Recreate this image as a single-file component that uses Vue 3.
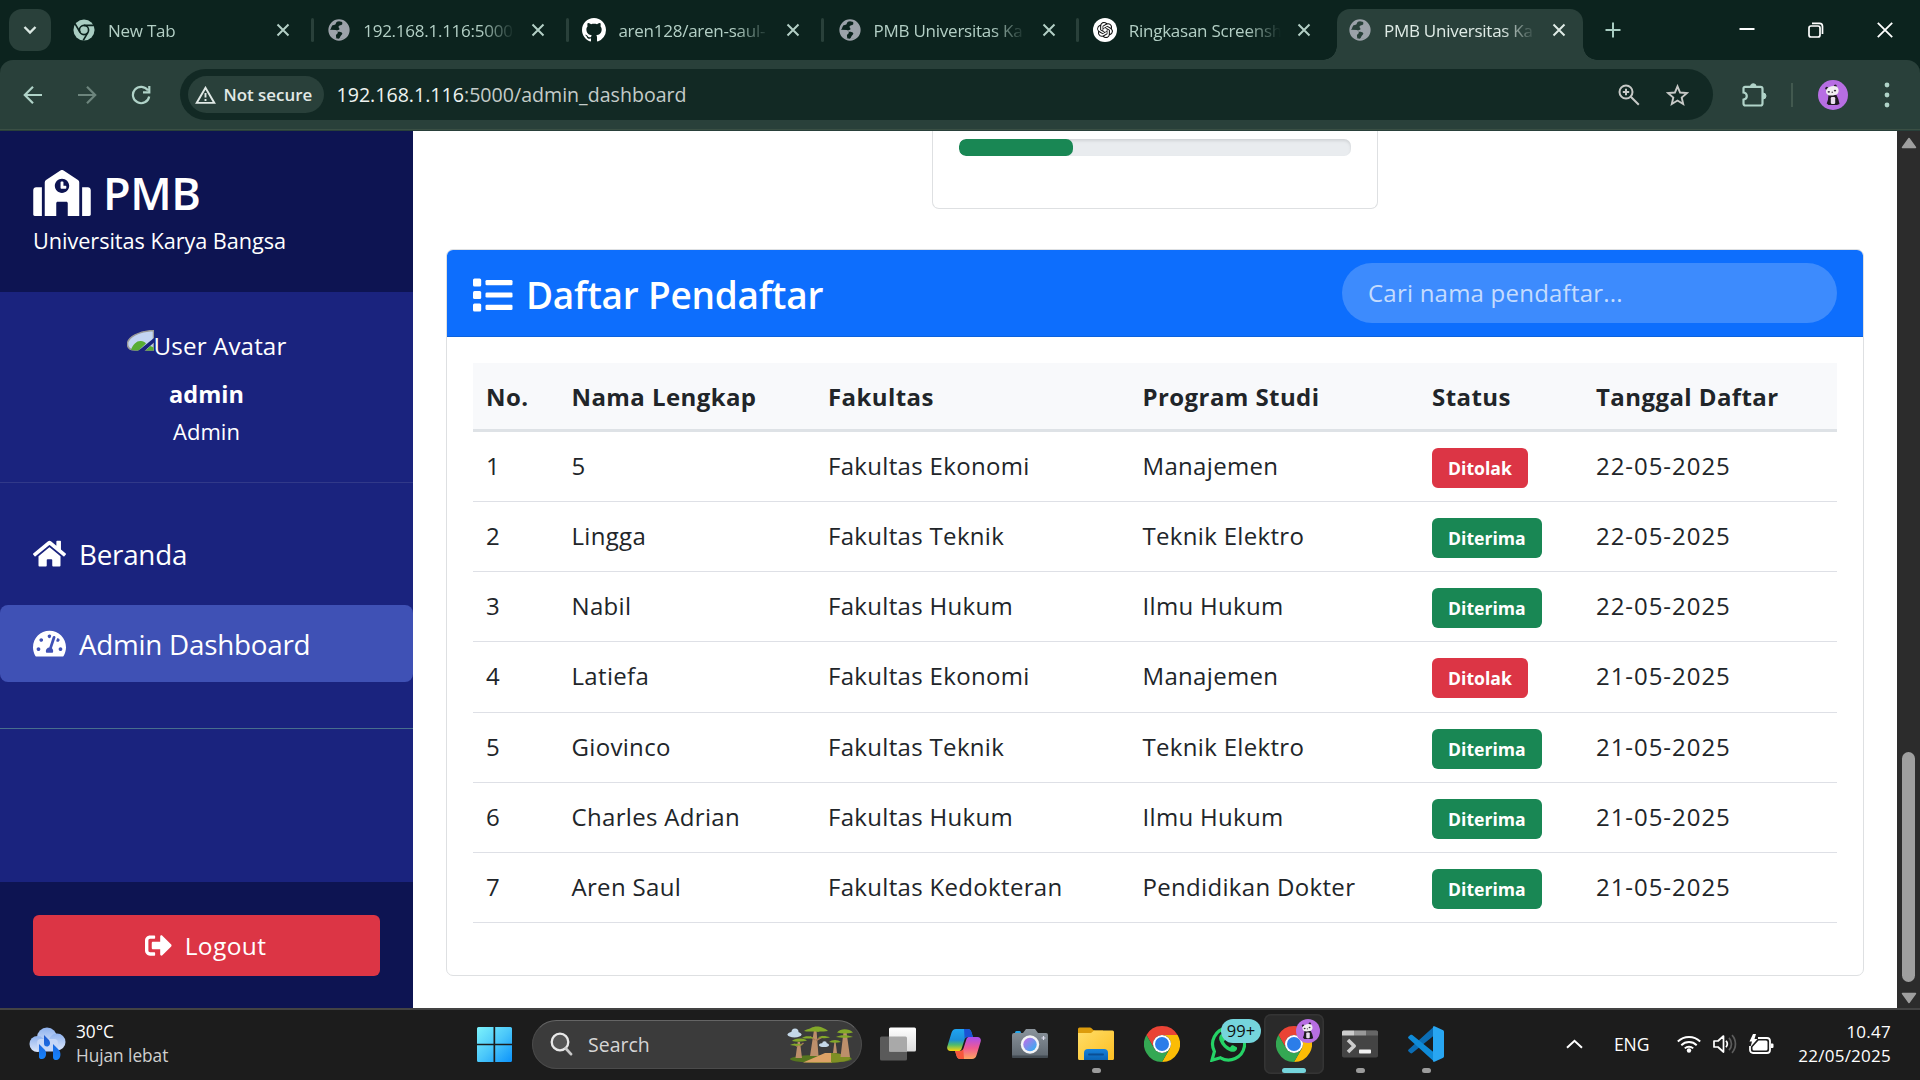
<script setup>
const tabs = [
  { title: 'New Tab', icon: 'i-chrome-mono' },
  { title: '192.168.1.116:5000', icon: 'i-globe' },
  { title: 'aren128/aren-saul-', icon: 'i-github' },
  { title: 'PMB Universitas Ka', icon: 'i-globe' },
  { title: 'Ringkasan Screensh', icon: 'i-openai' },
  { title: 'PMB Universitas Ka', icon: 'i-globe', active: true }
]

const applicants = [
  { name: '5', faculty: 'Fakultas Ekonomi', program: 'Manajemen', status: 'Ditolak', date: '22-05-2025' },
  { name: 'Lingga', faculty: 'Fakultas Teknik', program: 'Teknik Elektro', status: 'Diterima', date: '22-05-2025' },
  { name: 'Nabil', faculty: 'Fakultas Hukum', program: 'Ilmu Hukum', status: 'Diterima', date: '22-05-2025' },
  { name: 'Latiefa', faculty: 'Fakultas Ekonomi', program: 'Manajemen', status: 'Ditolak', date: '21-05-2025' },
  { name: 'Giovinco', faculty: 'Fakultas Teknik', program: 'Teknik Elektro', status: 'Diterima', date: '21-05-2025' },
  { name: 'Charles Adrian', faculty: 'Fakultas Hukum', program: 'Ilmu Hukum', status: 'Diterima', date: '21-05-2025' },
  { name: 'Aren Saul', faculty: 'Fakultas Kedokteran', program: 'Pendidikan Dokter', status: 'Diterima', date: '21-05-2025' }
]
</script>

<template>
  <div class="screen">
    <svg class="defs" width="0" height="0" aria-hidden="true">
      <defs>
        <linearGradient id="g-win" x1="0" y1="0" x2="1" y2="1"><stop offset="0" stop-color="#7df3fb" /><stop offset=".5" stop-color="#4cc8fa" /><stop offset="1" stop-color="#0c93fb" /></linearGradient>
        <linearGradient id="g-cloud" x1="0" y1="0" x2="0" y2="1"><stop offset="0" stop-color="#8fb2ee" /><stop offset="1" stop-color="#dce7fb" /></linearGradient>
        <linearGradient id="g-drop" x1="0" y1="0" x2="0" y2="1"><stop offset="0" stop-color="#1f58cc" /><stop offset="1" stop-color="#1585ff" /></linearGradient>
        <linearGradient id="g-folder" x1="0" y1="0" x2="1" y2="1"><stop offset="0" stop-color="#ffdd68" /><stop offset="1" stop-color="#fdbf22" /></linearGradient>
        <linearGradient id="g-folderblue" x1="0" y1="0" x2="0" y2="1"><stop offset="0" stop-color="#1782dc" /><stop offset="1" stop-color="#0b63b3" /></linearGradient>
        <linearGradient id="g-cam" x1="0" y1="0" x2="0" y2="1"><stop offset="0" stop-color="#8b949c" /><stop offset="1" stop-color="#5d666e" /></linearGradient>
        <linearGradient id="g-lens" x1="0" y1="0" x2="1" y2="1"><stop offset="0" stop-color="#c86be8" /><stop offset="1" stop-color="#26b4f2" /></linearGradient>
        <linearGradient id="g-cop1" x1="0" y1="0" x2="0" y2="1"><stop offset="0" stop-color="#1fa4f2" /><stop offset=".5" stop-color="#1b8fd8" /><stop offset=".72" stop-color="#4fbb6d" /><stop offset="1" stop-color="#fbd40b" /></linearGradient>
        <linearGradient id="g-cop2" x1="0" y1="0" x2="0" y2="1"><stop offset="0" stop-color="#a84df0" /><stop offset=".5" stop-color="#ef5a92" /><stop offset="1" stop-color="#fda560" /></linearGradient>
        <linearGradient id="g-tv" x1="0" y1="0" x2="0" y2="1"><stop offset="0" stop-color="#fff" /><stop offset="1" stop-color="#dcdcdc" /></linearGradient>
      </defs>
      <symbol id="i-chrome-mono" viewBox="0 0 24 24">
        <circle cx="12" cy="12" r="11.500" fill="#a9cdc2" />
        <circle cx="12" cy="12" r="5" fill="none" stroke="#0c231e" stroke-width="1.800" />
        <path d="M12 7H22.800M7.700 14.500L2.300 5.400M16.300 14.500L11.200 23.300" stroke="#0c231e" stroke-width="1.800" fill="none" />
      </symbol>
      <symbol id="i-globe" viewBox="0 0 24 24">
        <circle cx="12" cy="12" r="10.600" fill="none" stroke="#9ca2aa" stroke-width="2" />
        <path fill="#9ca2aa" d="M15.500 2.500c-.2 1.500.4 2.300 0 3.300-.8 1.500-3.500.8-4 2.300-.3 1.400 1.300 1.600 1 3-.2.900-2.600.6-2.700 2 0 1.300 3.600.6 5.200 1.600 1.300 1 .3 2.300-.8 3.300-1 1-1 2.600-2.300 3.800C17.500 22.500 22.500 18 22.500 12c0-4.500-3-8.300-7-9.500zM1.800 11.800l6.400.2c2 .3 2.600 1.600 2.500 3-.2 1.300-1.700 1.400-2 2.700-.2 1.300.6 2.300.2 3.900C4.500 20.300 1.800 16.500 1.800 11.800zM2 11C2.500 6 6 2.500 10 1.900L8 6 4.500 7.200 3 10.500z" />
      </symbol>
      <symbol id="i-github" viewBox="0 0 16 16">
        <path fill="#fff" d="M8 0C3.580 0 0 3.580 0 8c0 3.540 2.290 6.530 5.470 7.590.4.070.55-.17.55-.38 0-.19-.01-.82-.01-1.490-2.010.37-2.530-.49-2.690-.94-.09-.23-.48-.94-.82-1.130-.28-.15-.68-.52-.01-.53.63-.01 1.080.58 1.230.82.72 1.210 1.870.87 2.330.66.07-.52.28-.87.51-1.070-1.780-.2-3.640-.89-3.640-3.950 0-.87.31-1.590.82-2.150-.08-.2-.36-1.020.08-2.120 0 0 .67-.21 2.200.82.64-.18 1.320-.27 2-.27s1.360.09 2 .27c1.530-1.040 2.200-.82 2.200-.82.44 1.100.16 1.920.08 2.120.51.56.82 1.270.82 2.150 0 3.070-1.870 3.750-3.650 3.950.29.25.54.73.54 1.480 0 1.070-.01 1.930-.01 2.200 0 .21.15.46.55.38A8.010 8.010 0 0 0 16 8c0-4.420-3.580-8-8-8z" />
      </symbol>
      <symbol id="i-openai" viewBox="-6 -6 36 36">
        <circle cx="12" cy="12" r="18" fill="#fff" />
        <path fill="#111" d="M22.2819 9.8211a5.9847 5.9847 0 0 0-.5157-4.9108 6.0462 6.0462 0 0 0-6.5098-2.9A6.0651 6.0651 0 0 0 4.9807 4.1818a5.9847 5.9847 0 0 0-3.9977 2.9 6.0462 6.0462 0 0 0 .7427 7.0966 5.98 5.98 0 0 0 .511 4.9107 6.051 6.051 0 0 0 6.5146 2.9001A5.9847 5.9847 0 0 0 13.2599 24a6.0557 6.0557 0 0 0 5.7718-4.2058 5.9894 5.9894 0 0 0 3.9977-2.9001 6.0557 6.0557 0 0 0-.7475-7.0729zm-9.022 12.6081a4.4755 4.4755 0 0 1-2.8764-1.0408l.1419-.0804 4.7783-2.7582a.7948.7948 0 0 0 .3927-.6813v-6.7369l2.02 1.1686a.071.071 0 0 1 .038.052v5.5826a4.504 4.504 0 0 1-4.4945 4.4944zm-9.6607-4.1254a4.4708 4.4708 0 0 1-.5346-3.0137l.142.0852 4.783 2.7582a.7712.7712 0 0 0 .7806 0l5.8428-3.3685v2.3324a.0804.0804 0 0 1-.0332.0615L9.74 19.9502a4.4992 4.4992 0 0 1-6.1408-1.6464zM2.3408 7.8956a4.485 4.485 0 0 1 2.3655-1.9728V11.6a.7664.7664 0 0 0 .3879.6765l5.8144 3.3543-2.0201 1.1685a.0757.0757 0 0 1-.071 0l-4.8303-2.7865A4.504 4.504 0 0 1 2.3408 7.872zm16.5963 3.8558L13.1038 8.364 15.1192 7.2a.0757.0757 0 0 1 .071 0l4.8303 2.7913a4.4944 4.4944 0 0 1-.6765 8.1042v-5.6772a.79.79 0 0 0-.407-.667zm2.0107-3.0231l-.142-.0852-4.7735-2.7818a.7759.7759 0 0 0-.7854 0L9.409 9.2297V6.8974a.0662.0662 0 0 1 .0284-.0615l4.8303-2.7866a4.4992 4.4992 0 0 1 6.6802 4.66zM8.3065 12.863l-2.02-1.1638a.0804.0804 0 0 1-.038-.0567V6.0742a4.4992 4.4992 0 0 1 7.3757-3.4537l-.142.0805L8.704 5.459a.7948.7948 0 0 0-.3927.6813zm1.0976-2.3654l2.602-1.4998 2.6069 1.4998v2.9994l-2.5974 1.4997-2.6067-1.4997Z" />
      </symbol>
      <symbol id="i-chrome" viewBox="0 0 36 36">
        <path fill="#ea4335" d="M2.410 9A18 18 0 0 1 33.590 9H18a9 9 0 0 0-7.790 13.500z" />
        <path fill="#fbbc05" d="M33.590 9A18 18 0 0 1 18 36l7.790-13.500A9 9 0 0 0 18 9z" />
        <path fill="#34a853" d="M18 36A18 18 0 0 1 2.410 9l7.800 13.500a9 9 0 0 0 15.580 0z" />
        <circle cx="18" cy="18" r="9" fill="#fff" />
        <circle cx="18" cy="18" r="7" fill="#2b7de9" />
      </symbol>
      <symbol id="i-panda" viewBox="0 0 30 30">
        <circle cx="15" cy="15" r="15" fill="#b76ee3" />
        <circle cx="8.800" cy="8.300" r="1.500" fill="#26202a" /><circle cx="17.300" cy="6" r="1.500" fill="#26202a" />
        <path d="M10.500 15h8l1.800 4 1.200 5-2.500 1h-8.500l-1.800-1.500 1.200-3.500z" fill="#1f1a22" />
        <rect x="12.800" y="17" width="4.400" height="7" rx="1.200" fill="#eadff0" />
        <path d="M8.200 10c1.500-3 7-5 10.800-3.200 2 2 2.200 5 .6 7-2 2-8 2.200-9.600 1.200C8.400 14 7.600 12 8.200 10z" fill="#f1eef2" />
        <ellipse cx="10.800" cy="11.800" rx="1.200" ry=".9" fill="#3a3340" /><ellipse cx="17" cy="10.600" rx="1.200" ry=".9" fill="#3a3340" />
        <circle cx="14.200" cy="12.300" r=".7" fill="#3a3340" />
      </symbol>
    </svg>

    <header class="tabstrip">
      <div class="tab-search">
        <svg width="14" height="10" viewBox="0 0 14 10"><path d="M1.500 2l5.500 5.500L12.500 2" fill="none" stroke="#dbe8e3" stroke-width="2.400" /></svg>
      </div>
      <div class="tabs">
        <div v-for="(tab, i) in tabs" :key="i" class="tab" :class="{ active: tab.active, last: i === 4 }">
          <div class="tab-body">
            <svg class="favicon" :class="{ large: tab.icon === 'i-openai' || tab.icon === 'i-github' }"><use :href="'#' + tab.icon" /></svg>
            <span class="tab-title">{{ tab.title }}</span>
            <svg class="tab-close" width="14" height="14" viewBox="0 0 14 14"><path d="M1.500 1.500l11 11m0-11l-11 11" stroke="currentColor" stroke-width="2" /></svg>
          </div>
        </div>
      </div>
      <div class="new-tab"><svg width="16" height="16" viewBox="0 0 16 16"><path d="M8 .5v15M.5 8h15" stroke="#a9cdc2" stroke-width="2" /></svg></div>
      <div class="window-buttons">
        <svg width="16" height="16" viewBox="0 0 16 16"><path d="M.5 7h15" stroke="#fff" stroke-width="2" /></svg>
        <svg width="16" height="16" viewBox="0 0 16 16"><rect x="1" y="4" width="11" height="11" rx="2" fill="none" stroke="#fff" stroke-width="1.700" /><path d="M4 1.400h7.500a3 3 0 0 1 3 3V12" fill="none" stroke="#fff" stroke-width="1.700" /></svg>
        <svg width="16" height="16" viewBox="0 0 16 16"><path d="M.8.8l14.400 14.400M15.200.8L.8 15.200" stroke="#fff" stroke-width="1.800" /></svg>
      </div>
    </header>

    <div class="toolbar">
      <div class="nav-icons">
        <svg width="20" height="20" viewBox="0 0 20 20"><path d="M19 10H2M10 1.800L1.800 10l8.200 8.200" fill="none" stroke="#b0d3c8" stroke-width="2.200" /></svg>
        <svg width="20" height="20" viewBox="0 0 20 20"><path d="M1 10h17M10 1.800l8.200 8.200-8.200 8.200" fill="none" stroke="#6d857d" stroke-width="2.200" /></svg>
        <svg width="20" height="20" viewBox="0 0 20 20"><path d="M17 5.500A8.200 8.200 0 1 0 18.200 11.500M18.300 1v6.300H12" fill="none" stroke="#b0d3c8" stroke-width="2.200" /></svg>
      </div>
      <div class="omnibox">
        <div class="chip">
          <svg width="21" height="18" viewBox="0 0 21 18"><path d="M10.500 1.800L1.700 16.900h17.600z" fill="none" stroke="#e1e9e6" stroke-width="1.900" /><path d="M10.500 7v4.500M10.500 13v2" stroke="#e1e9e6" stroke-width="1.900" /></svg>
          <span>Not secure</span>
        </div>
        <span class="url"><b>192.168.1.116</b>:5000/admin_dashboard</span>
        <svg class="zoom-icon" width="22" height="22" viewBox="0 0 22 22"><circle cx="8" cy="8" r="6.500" fill="none" stroke="#c7c9c7" stroke-width="2" /><path d="M12.800 12.800l8 8M8 4.800v6.400M4.800 8h6.400" stroke="#c7c9c7" stroke-width="2" /></svg>
        <svg width="23" height="22" viewBox="0 0 23 22"><path d="M11.500 2.300l2.600 6.200 6.700.6-5.100 4.400 1.500 6.500-5.700-3.500-5.700 3.500 1.500-6.500-5.100-4.400 6.700-.6z" fill="none" stroke="#c7c9c7" stroke-width="1.900" /></svg>
      </div>
      <svg class="puzzle" width="26" height="26" viewBox="0 0 26 26"><path d="M4 4.800h15.500a2 2 0 0 1 2 2v14.700a2 2 0 0 1-2 2H4.500a2 2 0 0 1-2-2v-3.800c2.300-.4 3.300-1.700 3.300-3.600s-1-3.200-3.300-3.600V6.300A1.500 1.500 0 0 1 4 4.800z" fill="none" stroke="#b0d3c8" stroke-width="2.200" /><path d="M9.500 4.500a2.800 2.800 0 0 1 5.600 0zM22 11a3 3 0 0 1 0 6z" fill="#b0d3c8" stroke="#b0d3c8" /></svg>
      <i class="bar-sep"></i>
      <svg class="avatar"><use href="#i-panda" /></svg>
      <svg width="6" height="26" viewBox="0 0 6 26"><circle cx="3" cy="3" r="2.400" fill="#b0d3c8" /><circle cx="3" cy="13" r="2.400" fill="#b0d3c8" /><circle cx="3" cy="23" r="2.400" fill="#b0d3c8" /></svg>
    </div>

    <div class="viewport">
      <aside class="sidebar">
        <div class="brand">
          <div class="brand-row">
            <svg width="58" height="46" viewBox="0 0 640 512"><path fill="#fff" d="M0 224v272c0 8.840 7.160 16 16 16h80V192H32c-17.670 0-32 14.330-32 32zm360-48h-24v-40c0-4.420-3.580-8-8-8h-16c-4.420 0-8 3.580-8 8v64c0 4.420 3.580 8 8 8h48c4.420 0 8-3.580 8-8v-16c0-4.420-3.580-8-8-8zm137.750-63.960l-160-106.670a32.020 32.020 0 0 0-35.500 0l-160 106.670A32.002 32.002 0 0 0 128 138.660V512h128V368c0-8.840 7.160-16 16-16h96c8.840 0 16 7.160 16 16v144h128V138.670c0-10.700-5.350-20.690-14.250-26.630zM320 256c-44.180 0-80-35.820-80-80s35.820-80 80-80 80 35.820 80 80-35.820 80-80 80zm288-64h-64v320h80c8.840 0 16-7.160 16-16V224c0-17.670-14.330-32-32-32z" /></svg>
            <span class="brand-name">PMB</span>
          </div>
          <div class="brand-sub">Universitas Karya Bangsa</div>
        </div>
        <div class="profile">
          <div class="broken">
            <svg width="27" height="21" viewBox="0 0 27 21"><path d="M26.500.5V20H8C3 20 .5 17.500.5 14 .5 7 12 1 26.500.5z" fill="#c3d5f3" stroke="#9a9a98" stroke-width="1.500" /><path d="M4 20c2-6 6-9.500 10-9 2 .2 4 1 5 2.500L11.500 20.500z" fill="#58ad33" /><path d="M11 21L27 8v4.500L17.500 21z" fill="#1a237e" /><path d="M18.500 20.500l5-4.500 3 1.500v3z" fill="#58ad33" /></svg>
            <span>User Avatar</span>
          </div>
          <div class="user-name">admin</div>
          <div class="user-role">Admin</div>
        </div>
        <nav class="menu">
          <a class="menu-item">
            <svg width="33" height="29.400" viewBox="0 0 576 512"><path fill="#fff" d="M280.370 148.260L96 300.110V464a16 16 0 0 0 16 16l112.060-.29a16 16 0 0 0 15.920-16V368a16 16 0 0 1 16-16h64a16 16 0 0 1 16 16v95.640a16 16 0 0 0 16 16.050L464 480a16 16 0 0 0 16-16V300L295.670 148.260a12.190 12.190 0 0 0-15.300 0zM571.600 251.470L488 182.560V44.050a12 12 0 0 0-12-12h-56a12 12 0 0 0-12 12v72.610L318.470 43a48 48 0 0 0-61 0L4.340 251.470a12 12 0 0 0-1.600 16.900l25.500 31A12 12 0 0 0 45.150 301l235.220-193.740a12.190 12.190 0 0 1 15.300 0L530.900 301a12 12 0 0 0 16.900-1.600l25.500-31a12 12 0 0 0-1.700-16.930z" /></svg>
            <span>Beranda</span>
          </a>
          <a class="menu-item current">
            <svg width="33" height="29.400" viewBox="0 0 576 512"><path fill="#fff" d="M288 32C128.940 32 0 160.940 0 320c0 52.800 14.250 102.260 39.060 144.800 5.610 9.620 16.300 15.200 27.440 15.200h443c11.140 0 21.830-5.580 27.440-15.200C561.750 422.260 576 372.800 576 320c0-159.060-128.940-288-288-288zm0 64c14.710 0 26.580 10.130 30.320 23.650-1.110 2.260-2.640 4.230-3.450 6.670l-9.220 27.670c-5.130 3.490-10.970 6.010-17.640 6.010-17.670 0-32-14.330-32-32S270.330 96 288 96zM96 384c-17.670 0-32-14.330-32-32s14.330-32 32-32 32 14.330 32 32-14.330 32-32 32zm48-160c-17.670 0-32-14.330-32-32s14.330-32 32-32 32 14.330 32 32-14.330 32-32 32zm246.770-72.410l-61.330 184C343.130 347.330 352 364.540 352 384c0 11.720-3.380 22.550-8.880 32H232.880c-5.500-9.450-8.880-20.280-8.880-32 0-33.940 26.500-61.430 59.900-63.590l61.340-184.010c4.170-12.560 17.730-19.450 30.360-15.170 12.570 4.190 19.350 17.790 15.170 30.360zm14.660 57.200l15.520-46.550c3.470-1.290 7.130-2.230 11.050-2.230 17.670 0 32 14.330 32 32s-14.330 32-32 32c-11.380-.01-20.890-6.280-26.570-15.220zM480 384c-17.670 0-32-14.330-32-32s14.330-32 32-32 32 14.330 32 32-14.330 32-32 32z" /></svg>
            <span>Admin Dashboard</span>
          </a>
        </nav>
        <div class="rule"></div>
        <div class="side-foot">
          <button class="logout">
            <svg width="27" height="27" viewBox="0 0 512 512"><path fill="#fff" d="M497 273L329 441c-15 15-41 4.500-41-17v-96H152c-13.300 0-24-10.700-24-24v-96c0-13.300 10.700-24 24-24h136V88c0-21.400 25.900-32 41-17l168 168c9.300 9.400 9.300 24.600 0 34zM192 436v-40c0-6.600-5.400-12-12-12H96c-17.700 0-32-14.300-32-32V160c0-17.700 14.300-32 32-32h84c6.600 0 12-5.400 12-12V76c0-6.600-5.400-12-12-12H96c-53 0-96 43-96 96v192c0 53 43 96 96 96h84c6.600 0 12-5.400 12-12z" /></svg>
            <span>Logout</span>
          </button>
        </div>
      </aside>

      <main class="content">
        <div class="stat-card">
          <div class="progress"><div class="progress-fill"></div></div>
        </div>
        <section class="card">
          <div class="card-head">
            <svg class="list-icon" width="40" height="34" viewBox="0 0 40 34" fill="#fff"><rect y=".5" width="8.200" height="8" rx="1.500" /><rect y="13" width="8.200" height="8" rx="1.500" /><rect y="25.500" width="8.200" height="8" rx="1.500" /><rect x="12.500" y="2" width="27" height="5.200" rx="1.300" /><rect x="12.500" y="14.400" width="27" height="5.200" rx="1.300" /><rect x="12.500" y="26.800" width="27" height="5.200" rx="1.300" /></svg>
            <h2>Daftar Pendaftar</h2>
            <div class="search">Cari nama pendaftar...</div>
          </div>
          <table>
            <colgroup><col class="c1" /><col class="c2" /><col class="c3" /><col class="c4" /><col class="c5" /><col /></colgroup>
            <thead>
              <tr><th>No.</th><th>Nama Lengkap</th><th>Fakultas</th><th>Program Studi</th><th>Status</th><th>Tanggal Daftar</th></tr>
            </thead>
            <tbody>
              <tr v-for="(a, i) in applicants" :key="i">
                <td>{{ i + 1 }}</td>
                <td>{{ a.name }}</td>
                <td>{{ a.faculty }}</td>
                <td>{{ a.program }}</td>
                <td class="status"><span class="badge" :class="a.status === 'Diterima' ? 'ok' : 'no'">{{ a.status }}</span></td>
                <td class="date">{{ a.date }}</td>
              </tr>
            </tbody>
          </table>
        </section>
      </main>

      <div class="scrollbar">
        <svg width="16" height="12" viewBox="0 0 16 12"><path d="M8 1.500L14.500 10.500h-13z" fill="#9f9f9f" stroke="#9f9f9f" stroke-width="1.500" stroke-linejoin="round" /></svg>
        <div class="thumb"></div>
        <svg width="16" height="12" viewBox="0 0 16 12"><path d="M8 10.500L14.500 1.500h-13z" fill="#9f9f9f" stroke="#9f9f9f" stroke-width="1.500" stroke-linejoin="round" /></svg>
      </div>
    </div>

    <footer class="taskbar">
      <div class="weather">
        <svg width="37" height="34" viewBox="0 0 37 34">
          <circle cx="18" cy="10.500" r="10" fill="url(#g-cloud)" /><circle cx="28" cy="15" r="8.500" fill="url(#g-cloud)" /><circle cx="8.500" cy="17" r="8" fill="url(#g-cloud)" /><rect x="8" y="12" width="21" height="12.500" rx="4" fill="#c6d7f7" />
          <path d="M15 8l5 5c2.500 4 0 6.500-2 6.500s-3-1-3-3zM10 17l6 6c2.500 4 .5 9-3 9s-3-2-3-3.500zM24 17l6 6c3 4 1 10-2.500 10S24 31 24 29z" fill="url(#g-drop)" />
        </svg>
        <div class="weather-text"><span>30°C</span><span class="dim">Hujan lebat</span></div>
      </div>
      <svg class="start" width="35" height="35" viewBox="0 0 35 35"><path fill="url(#g-win)" d="M1.500 0H16.500V16.800H0V1.500A1.500 1.500 0 0 1 1.500 0zM18.200 0H33.500A1.500 1.500 0 0 1 35 1.500V16.800H18.200zM0 18.200H16.500V35H1.500A1.500 1.500 0 0 1 0 33.500zM18.200 18.200H35V33.500A1.500 1.500 0 0 1 33.500 35H18.200z" /></svg>
      <div class="task-search">
        <svg width="23" height="24" viewBox="0 0 23 24"><circle cx="10" cy="10" r="8.300" fill="#555" stroke="#e8e8e8" stroke-width="2.300" /><path d="M15.800 16.500l5.200 5.600" stroke="#c9c9c9" stroke-width="2.800" stroke-linecap="round" /></svg>
        <span>Search</span>
        <svg class="trees" width="66" height="37" viewBox="0 0 66 37">
          <ellipse cx="34" cy="33" rx="31" ry="4" fill="#56751f" /><path d="M16 36.500L38 27h7v9.500z" fill="#dda266" /><path d="M44 27c8 0 16 2 20 5-2 3-10 4.500-20 4.500z" fill="#7f8f24" />
          <path d="M8.500 32l2.200-16h2.300L15 32zM23 30l4-26h2.500l2 26zM46 27l1.500-12h1L50 27zM53.500 31l3-25h3L63 31z" fill="#bd8f6b" />
          <path d="M28 14l-5-3.500M29 14.500l7-4M11 21l-4-3M12.500 20l4-3" stroke="#a97b58" stroke-width="1.500" />
          <g fill="#83a829"><path d="M17 5c2-1.500 5-2 7-3 3-2 8-2 11-.5 2 1.200 5 1.800 6 3.500-4 1-7-.2-10 1-4-1.500-9 .5-14-1z" /><path d="M15 12c3-2.500 8-2.500 12 0-4 .5-8 1-12 0zM31 11.500c3-2 8-2 12 0-4 1-8 1-12 0zM5 15c2-3 11-3.500 15-.5-4 1.300-10 1.500-15 .5zM3 19c3-1.800 8-1.800 13 0-4 1-9 1-13 0zM50 6.500c4-4.500 12-4 16 0-5 1.200-11 1.200-16 0zM49 11c4-2.500 12-2.500 17 0-5 1-12 1-17 0zM42 16c3-2.800 9-2.800 12 0-4 1-8 1-12 0z" /></g>
          <g fill="#c5d8e8"><ellipse cx="7.500" cy="8.500" rx="7" ry="3" /><circle cx="8" cy="6" r="3.500" /><ellipse cx="37" cy="19" rx="5" ry="2" /><circle cx="37.500" cy="17.500" r="2.300" /></g>
        </svg>
      </div>
      <div class="apps">
        <div class="app"><svg width="36" height="34" viewBox="0 0 36 34"><rect y="9.500" width="27" height="24" rx="1.500" fill="#5a5a5a" /><rect x="9" y=".5" width="27" height="24" rx="1.500" fill="url(#g-tv)" /><path d="M9 9.500h16.500a1.500 1.500 0 0 1 1.500 1.500V24.500H9z" fill="#a9a9a9" /></svg></div>
        <div class="app"><svg width="34" height="30" viewBox="0 0 34 30"><path d="M9 0h11.500c2.500 0 3.500 1.500 4.200 4l1.200 4H21c-2 0-3 1-3.700 3.200L14.500 20c-.6 1.500-1.500 2-3 2H3.500C.8 22-.3 20 .3 17.500L4.500 3.800C5.300 1.300 6.500 0 9 0z" fill="url(#g-cop1)" /><path d="M17 0h3.500c2.500 0 3.500 1.500 4.200 4l1.200 4H21c-1.500 0-2.700.6-3.300 2z" fill="#1a52d4" /><path d="M25 30H13.500c-2.500 0-3.500-1.500-4.200-4L8.100 22H13c2 0 3-1 3.700-3.200L19.500 10c.6-1.500 1.500-2 3-2h8c2.700 0 3.800 2 3.200 4.500L29.500 26.200C28.700 28.700 27.500 30 25 30z" fill="url(#g-cop2)" /><path d="M17 30h-3.500c-2.500 0-3.500-1.500-4.200-4L8.100 22H13c1.500 0 2.700-.6 3.300-2z" fill="#f5573c" /></svg></div>
        <div class="app"><svg width="36" height="30" viewBox="0 0 36 30"><rect x="3" y="2" width="6" height="4" rx="1.500" fill="#22a8ee" /><path d="M2 4h9l3-4h9l3 4h8a2 2 0 0 1 2 2v21a2 2 0 0 1-2 2H2a2 2 0 0 1-2-2V6a2 2 0 0 1 2-2z" fill="url(#g-cam)" /><path d="M0 26.500h36v1a1.500 1.500 0 0 1-1.500 1.500h-33A1.500 1.500 0 0 1 0 27.500z" fill="#434b52" /><circle cx="18" cy="15.500" r="9.200" fill="#f3f3f5" /><circle cx="18" cy="15.500" r="6.700" fill="url(#g-lens)" /><path d="M31.500 7v4M29.500 9h4" stroke="#dde" stroke-width="1.200" /></svg></div>
        <div class="app running"><svg width="36" height="34" viewBox="0 0 36 34"><path d="M1.500.5H12c2 0 2.500 3 5 3h8v8H0V2A1.500 1.500 0 0 1 1.500.5z" fill="#dc9c0c" /><path d="M13 6l3-2.500h18.500A1.500 1.500 0 0 1 36 5v26.500a1.500 1.500 0 0 1-1.500 1.500h-33A1.500 1.500 0 0 1 0 31.500V6z" fill="url(#g-folder)" /><path d="M6 33V26a4 4 0 0 1 4-4h16a4 4 0 0 1 4 4v7z" fill="url(#g-folderblue)" /><path d="M11 27.500h14" stroke="#0a4e94" stroke-width="1.800" stroke-linecap="round" /></svg></div>
        <div class="app"><svg width="36" height="36"><use href="#i-chrome" /></svg></div>
        <div class="app"><svg width="36" height="36" viewBox="0 0 36 36"><path d="M2 34.200l2.400-8.800A16 16 0 1 1 10.500 31.800z" fill="none" stroke="#25d366" stroke-width="3.200" /><path transform="translate(7.500 7.500) scale(.92)" d="M6.200 1.200c-.8-1-1.900-.9-2.700-.1C1.800 2.800 1.300 5.200 2.200 7.500c2.300 5.700 6.500 9.800 11.800 12 2.500 1 5.300.3 6.700-1.600.7-1 .8-2.500.2-3l-4-2c-.8-.4-1.400-.2-1.900.5l-1.400 1.700c-3-1.100-5.400-3.500-6.700-6.300l1.200-1.400c.5-.6.600-1.200.3-1.900z" fill="#25d366" /></svg><span class="count">99+</span></div>
        <div class="app focused"><svg width="36" height="36"><use href="#i-chrome" /></svg><svg class="mini" width="24" height="24"><use href="#i-panda" /></svg></div>
        <div class="app running"><svg width="36" height="28" viewBox="0 0 36 28"><rect width="36" height="27" y=".5" rx="1.800" fill="#444" /><path d="M1.500.5H12v5H0V2A1.500 1.500 0 0 1 1.500.5z" fill="#ccc" /><path d="M12 .5h12v5H12z" fill="#999" /><path d="M24 .5h10.500A1.500 1.500 0 0 1 36 2v3.500H24z" fill="#666" /><path d="M6 10l6.200 6-6.200 6" fill="none" stroke="#ccc" stroke-width="3.600" stroke-linejoin="round" /><rect x="17" y="19.500" width="12" height="4" rx=".8" fill="#f2f2f2" /></svg></div>
        <div class="app running"><svg width="36" height="36" viewBox="0 0 36 36"><path d="M.6 23.500L26 .6V9.500L4.300 27c-.7.500-1.400.5-2 0L.6 25.500c-.7-.6-.7-1.400 0-2z" fill="#0b6db5" /><path d="M.6 12.500L26 35.400V26.500L4.300 9c-.7-.5-1.400-.5-2 0L.6 10.500c-.7.600-.7 1.400 0 2z" fill="#0f8bd8" /><path d="M26.500.3L34.700 4c.8.4 1.300 1.100 1.300 2v24c0 .9-.5 1.600-1.300 2l-8.200 3.700c-.8.300-1.500 0-1.500-1V1.300c0-1 .7-1.300 1.500-1z" fill="#28a6f2" /></svg></div>
      </div>
      <div class="tray">
        <svg width="17" height="10" viewBox="0 0 17 10"><path d="M1 8.800l7.500-7 7.500 7" fill="none" stroke="#fff" stroke-width="2" /></svg>
        <span class="lang">ENG</span>
        <svg class="wifi" width="24" height="18" viewBox="0 0 24 18"><path d="M.8 6.500a16 16 0 0 1 22.400 0M4.300 10.200a11 11 0 0 1 15.400 0M7.800 13.400a6 6 0 0 1 8.400 0" fill="none" stroke="#fff" stroke-width="1.900" /><circle cx="12" cy="15.500" r="2.200" fill="#fff" /></svg>
        <svg class="spk" width="24" height="20" viewBox="0 0 24 20"><path d="M1 7v6h4l5.500 5V2L5 7z" fill="none" stroke="#fff" stroke-width="1.700" stroke-linejoin="round" /><path d="M13 6.800a5 5 0 0 1 0 6.400" fill="none" stroke="#fff" stroke-width="1.700" /><path d="M16 3.800a9 9 0 0 1 0 12.400M19 1.200a13 13 0 0 1 0 17.600" fill="none" stroke="#5c5c5c" stroke-width="1.700" /></svg>
        <svg class="bat" width="25" height="21" viewBox="0 0 25 21"><path d="M9 4h9a3 3 0 0 1 3 3v9a3 3 0 0 1-3 3H4a3 3 0 0 1-3-3v-4" fill="none" stroke="#fff" stroke-width="1.800" /><path d="M22 9.500h1.500a1 1 0 0 1 1 1v2.500a1 1 0 0 1-1 1H22zM9.500 6.500H17A1.500 1.500 0 0 1 18.500 8v7a1.500 1.500 0 0 1-1.500 1.500H5A1.500 1.500 0 0 1 3.500 15v-2zM4 0L.5 7.500H3L1.500 13 8.500 5H5.500L7 0z" fill="#fff" /></svg>
        <div class="clock"><span>10.47</span><span>22/05/2025</span></div>
      </div>
    </footer>
  </div>
</template>

<style>
body { margin: 0; overflow: hidden; }
</style>

<style scoped>
.screen {
  display: flex;
  flex-direction: column;
  width: 1920px;
  height: 1080px;
  overflow: hidden;
  background: #0c231e;
  font-family: "Open Sans", "Noto Sans", sans-serif;
}
.screen * { box-sizing: border-box; }
.defs { position: absolute; }
svg { display: block; flex: none; }
span { white-space: nowrap; }

/* Tab strip */
.tabstrip { display: flex; align-items: flex-start; height: 60px; flex: none; }
.tab-search { display: flex; align-items: center; justify-content: center; width: 42px; height: 42px; margin: 9px 6.5px 0 9px; border-radius: 13px; background: #29403a; }
.tabs { display: flex; }
.tab { position: relative; width: 255.2px; height: 60px; padding: 9px 5.500px 0 3.500px; }
.tab::after { content: ""; position: absolute; right: -1px; top: 18px; width: 3px; height: 24px; border-radius: 2px; background: #29403a; }
.tab.last::after, .tab.active::after { display: none; }
.tab-body { position: relative; display: flex; align-items: center; height: 51px; padding: 0 0 9px 12px; color: #b3cfc5; }
.active .tab-body { background: #29403a; border-radius: 13px 13px 0 0; color: #dfebe6; }
.active .tab-body::before, .active .tab-body::after { content: ""; position: absolute; bottom: 0; width: 14px; height: 14px; }
.active .tab-body::before { left: -14px; background: radial-gradient(circle at 0 0, transparent 13.500px, #29403a 14px); }
.active .tab-body::after { right: -14px; background: radial-gradient(circle at 100% 0, transparent 13.500px, #29403a 14px); }
.favicon { width: 22px; height: 22px; }
.favicon.large { width: 24px; height: 24px; margin: 0 -1px; }
.tab-title { width: 152px; margin-left: 13px; padding-top: 2px; font-size: 17px; line-height: 26px; letter-spacing: -0.25px; -webkit-mask-image: linear-gradient(90deg, #000 118px, transparent 152px); mask-image: linear-gradient(90deg, #000 118px, transparent 152px); }
.tab-close { margin-left: 16px; }
.new-tab { padding: 22px 0 0 16px; }
.window-buttons { display: flex; gap: 53px; margin-left: auto; padding: 22px 27px 0 0; }

/* Toolbar */
.toolbar { display: flex; align-items: center; height: 71px; flex: none; padding: 0 30px 2px 23px; border-radius: 13px 13px 0 0; background: #29403a; box-shadow: inset 0 -1px #29403a, inset 0 -2px #3a4f44; }
.nav-icons { display: flex; gap: 34px; width: 157px; }
.omnibox { display: flex; align-items: center; width: 1533px; height: 51px; padding: 0 24.500px 0 7.500px; border-radius: 26px; background: #122924; }
.chip { display: flex; align-items: center; gap: 8px; width: 136.500px; height: 37px; padding-left: 7px; border-radius: 19px; background: #29403a; color: #e1e9e6; font-size: 16.900px; font-weight: 600; }
.url { margin-left: 12.500px; color: #c4ccc9; font-size: 19.600px; letter-spacing: 0; }
.url b { color: #eef3f1; font-weight: 400; }
.zoom-icon { margin-left: auto; margin-right: 26px; }
.puzzle { margin-left: 28px; }
.bar-sep { width: 2px; height: 24px; margin: 0 25px 0 24px; background: #42594f; }
.avatar { width: 30px; height: 30px; margin-right: auto; }

/* Page */
.viewport { display: flex; height: 877px; flex: none; background: #fff; }
.sidebar { display: flex; flex-direction: column; width: 413px; background: #1a237e; color: #fff; }
.brand { height: 161px; padding: 38px 33px 0; background: #0d1452; }
.brand-row { display: flex; align-items: center; height: 47px; gap: 12px; }
.brand-name { font-size: 45px; font-weight: 600; letter-spacing: -0.5px; line-height: 50px; margin-top: 1px; }
.brand-sub { margin-top: 9px; font-size: 21.700px; line-height: 32px; letter-spacing: -0.05px; }
.profile { display: flex; flex-direction: column; align-items: center; height: 191px; padding-top: 37px; border-bottom: 1px solid #313989; }
.broken { display: flex; padding-top: 1px; }
.broken span { margin-top: -2px; font-size: 24.200px; line-height: 36px; letter-spacing: 0.1px; }
.user-name { margin-top: 12px; font-size: 23.500px; font-weight: 700; line-height: 36px; }
.user-role { margin-top: 3px; font-size: 22px; line-height: 32px; }
.menu { padding-top: 32px; }
.menu-item { display: flex; align-items: center; gap: 13px; height: 77px; padding-left: 33px; margin-bottom: 13px; border-radius: 8px; font-size: 27.800px; letter-spacing: -0.25px; }
.menu-item.current { background: #3f51b5; }
.rule { height: 1px; margin-top: 33px; background: #486e8d; }
.side-foot { height: 126px; margin-top: auto; padding: 33px; background: #0d1452; }
.logout { display: flex; align-items: center; justify-content: center; gap: 13px; width: 347px; height: 61px; padding: 0 2px 0 0; border: 0; border-radius: 6px; background: #dc3545; color: #fff; font: 24.500px "Open Sans", sans-serif; letter-spacing: 0.4px; }

.content { display: flex; flex-direction: column; width: 1484px; padding-left: 33px; }
.stat-card { width: 446px; height: 78px; margin-left: 486px; padding: 8px 26px 0; border: 1px solid #dee0e2; border-top: 0; border-radius: 0 0 7px 7px; }
.progress { height: 17px; border-radius: 7px; background: #e9ecef; box-shadow: inset 0 2px 3px #0000001a; overflow: hidden; }
.progress-fill { width: 29%; height: 100%; border-radius: 7px; background: #198754; }
.card { width: 1418px; height: 727px; margin-top: 40px; border: 1px solid #dee0e2; border-radius: 7px; }
.card-head { display: flex; align-items: center; height: 87px; padding: 0 26px; border-bottom: 1px solid #0c62dc; border-radius: 6px 6px 0 0; background: #0d6efd; color: #fff; }
.list-icon { margin-top: 3px; }
.card-head h2 { margin: 4px 0 0 13px; font-size: 37px; font-weight: 600; line-height: 50px; letter-spacing: -0.25px; }
.search { width: 495px; height: 60px; margin-left: auto; padding-left: 26px; border-radius: 30px; background: #3d8bfd; color: #c5dcfe; font-size: 24px; line-height: 60px; letter-spacing: 0.22px; }
table { width: 1364px; margin: 26px 0 0 26px; border-collapse: separate; border-spacing: 0; table-layout: fixed; color: #212529; font-size: 24px; }
.c1 { width: 85.500px; } .c2 { width: 256.500px; } .c3 { width: 314.500px; } .c4 { width: 289.500px; } .c5 { width: 164px; }
th, td { text-align: left; white-space: nowrap; vertical-align: middle; }
th { height: 69px; padding: 1px 0 0 13px; border-bottom: 3px solid #dee2e6; background: #f8f9fb; font-size: 24px; font-weight: 700; letter-spacing: 0.42px; }
td { height: 70.14px; padding: 0 0 2px 13px; border-bottom: 1px solid #dee0e6; letter-spacing: 0.32px; }
td.date { letter-spacing: 0.95px; }
td.status { padding-bottom: 0; }
.badge { display: block; width: max-content; height: 40px; margin-top: 3px; padding: 0 16px; border-radius: 6px; color: #fff; font-size: 17.600px; font-weight: 700; line-height: 40px; letter-spacing: 0; }
.ok { background: #198754; }
.no { background: #dc3545; }

.scrollbar { display: flex; flex-direction: column; align-items: center; width: 23px; padding: 6px 0 4px; background: #2c2c2c; }
.thumb { width: 13px; height: 230px; margin: auto 0 10px; border-radius: 7px; background: #9f9f9f; }

/* Taskbar */
.taskbar { display: flex; align-items: center; height: 72px; padding-bottom: 2px; border-top: 2px solid #434343; background: #1c1c1c; color: #fff; }
.weather { display: flex; align-items: center; gap: 10px; width: 477px; padding-left: 29px; }
.weather-text { display: flex; flex-direction: column; font-size: 17.300px; line-height: 24px; letter-spacing: -0.05px; }
.dim { color: #cfcfcf; }
.task-search { display: flex; align-items: center; width: 330px; height: 49px; margin-left: 20px; padding: 0 8px 0 17px; border: 1.500px solid #4b4b4b; border-top-color: #656565; border-radius: 25px; background: #3b3b3b; }
.task-search span { margin-left: 15px; color: #d6d6d6; font-size: 19.500px; }
.trees { margin-left: auto; }
.apps { display: flex; gap: 6px; margin-left: 6px; }
.app { position: relative; display: flex; align-items: center; justify-content: center; width: 60px; height: 60px; }
.app.running::after, .app.focused::after { content: ""; position: absolute; bottom: 1px; left: 25.500px; width: 9px; height: 5px; border-radius: 3px; background: #9b9b9b; }
.app.focused { border-radius: 7px; background: #2a2a2a; box-shadow: inset 0 0 0 1.500px #343434; }
.app.focused::after { left: 18px; width: 24px; background: #75d5dc; }
.count { position: absolute; left: 23px; top: 5px; width: 40px; height: 24px; border-radius: 12px; background: #75d5dc; color: #101010; font-size: 16.500px; line-height: 24px; text-align: center; }
.mini { position: absolute; left: 32px; top: 5px; }
.tray { display: flex; align-items: center; flex: 1; margin-left: 110px; padding-right: 29px; }
.lang { margin-left: 31px; font-size: 17.500px; letter-spacing: -0.1px; }
.wifi { margin-left: 28px; }
.spk { margin-left: 12px; }
.bat { margin-left: 12px; }
.clock { display: flex; flex-direction: column; align-items: flex-end; margin-left: auto; font-size: 17px; line-height: 24px; letter-spacing: 0.25px; }
</style>
